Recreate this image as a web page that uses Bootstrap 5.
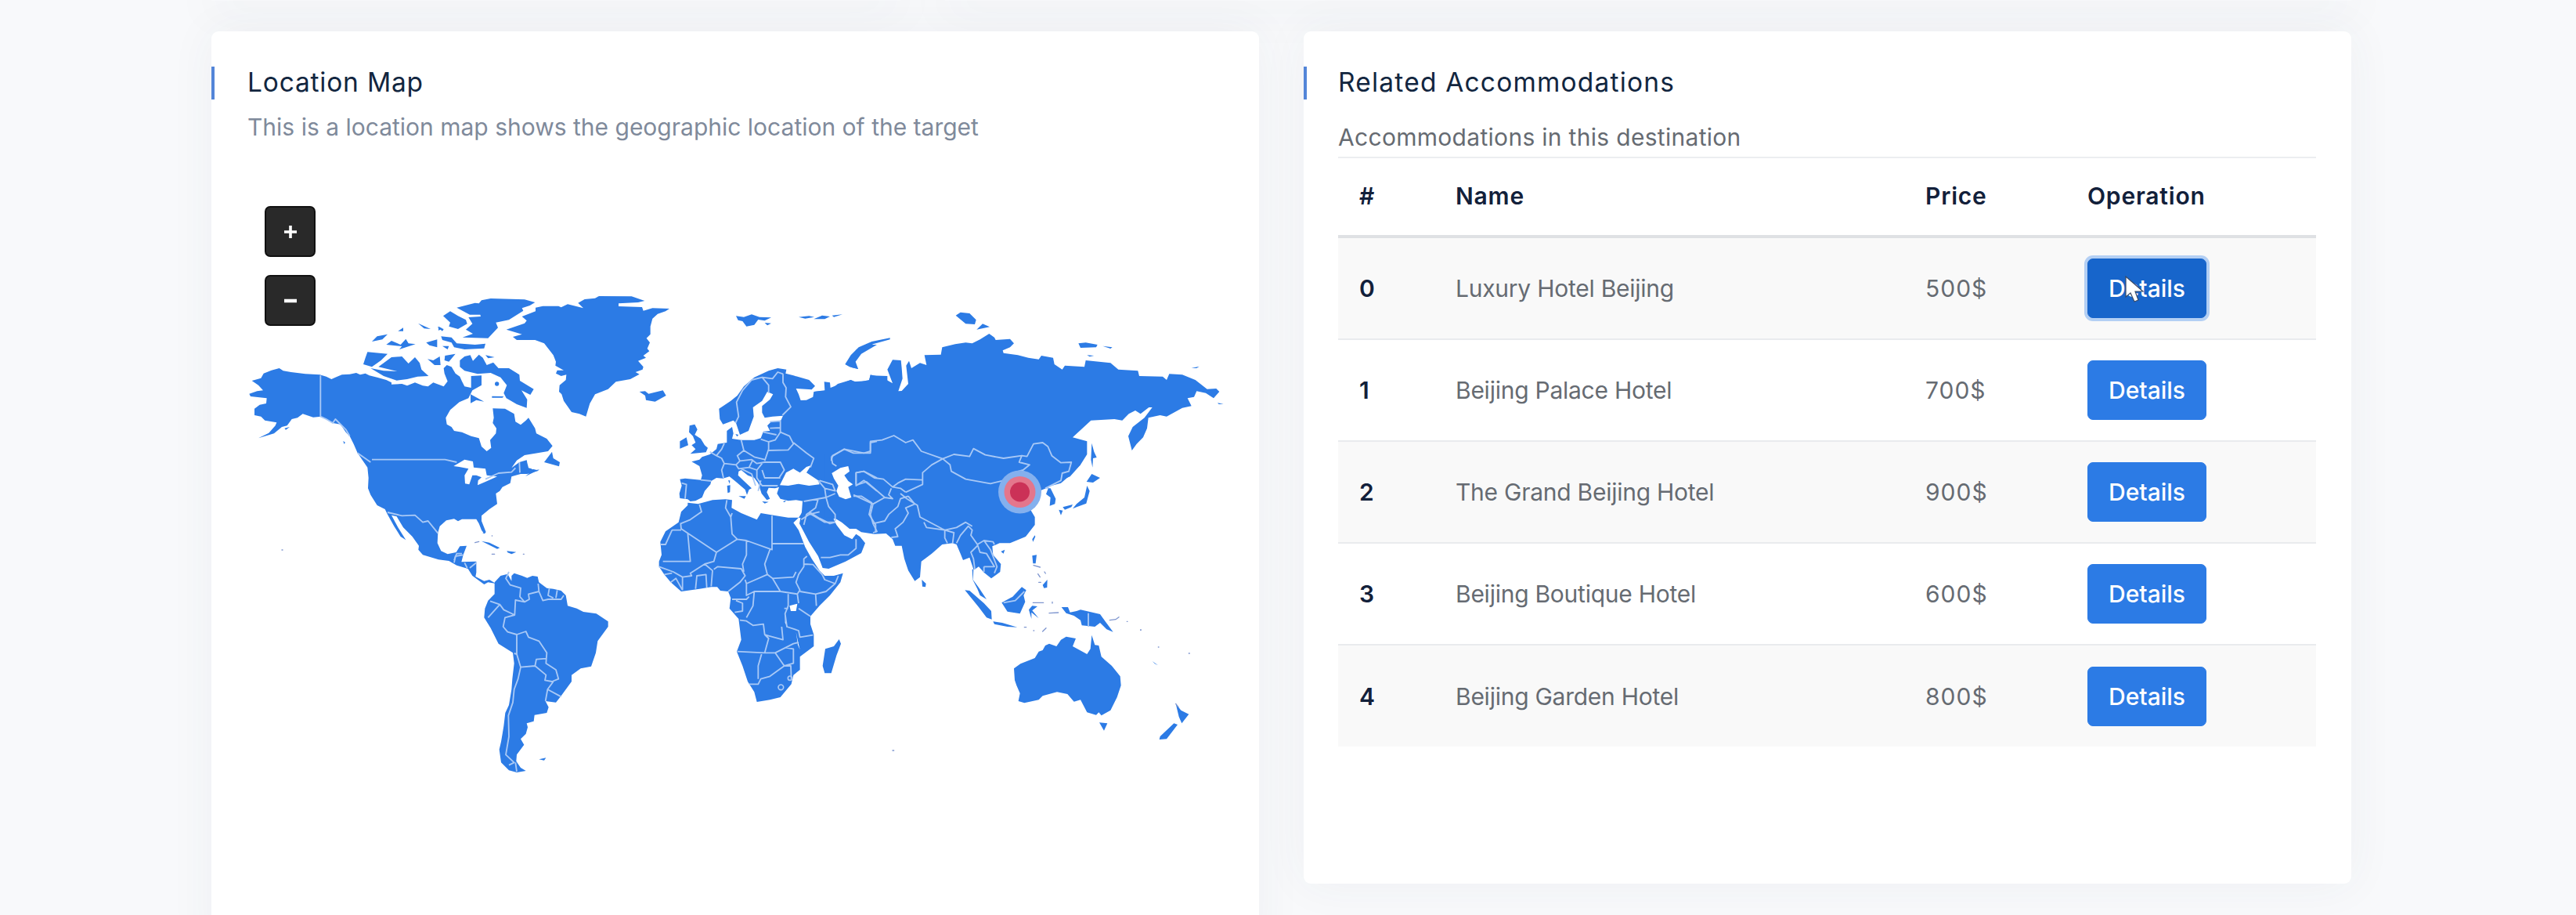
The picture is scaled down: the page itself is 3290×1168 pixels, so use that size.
<!DOCTYPE html>
<html lang="en">
<head>
<meta charset="utf-8">
<meta name="viewport" content="width=device-width, initial-scale=1">
<title>Destination</title>
<link href="https://cdn.jsdelivr.net/npm/bootstrap@5.3.0/dist/css/bootstrap.min.css" rel="stylesheet">
<style>
html,body{height:1168px;overflow:hidden}
body{background:#f8f9fb;font-family:Inter,"Liberation Sans",sans-serif;font-size:30px;line-height:44px;color:#666b72}
.page-top{height:40px;padding:0 287px 0 270px;gap:57px}
.page-top div{height:1px;box-shadow:0 0 60px 6px rgba(60,70,90,.1)}
.upper-a{width:880px}
.upper-b{flex:1}
.page-grid{padding:0 287px 0 270px;gap:57px}
.panel{width:1338px;background:#fff;border:0;border-radius:9px;box-shadow:0 0 60px rgba(60,75,100,.055);padding:45px 45px 0 46px}
.panel-map{height:1180px}
.panel-list{height:1088px;padding-left:44px}
.panel-title{font-size:33.5px;line-height:40px;height:42px;font-weight:400;color:#12263f;margin:0;position:relative;letter-spacing:.8px}
.panel-list .panel-title{letter-spacing:1.2px}
.panel-title::before{content:"";position:absolute;left:-46px;top:0;width:4px;height:42px;background:#5385d8}
.panel-list .panel-title::before{left:-44px}
.map-text{color:#7f8a9b;margin:13px 0 0;line-height:44px}
.list-text{margin:26px 0 3px;line-height:44px;letter-spacing:.3px}
.map-box{position:relative;margin-top:79px}
.zoom-set{position:absolute;left:22px;top:0;gap:23px}
.zoom-key{width:65px;height:65px;border-radius:7px;background:#292929;color:#fff;border:2px solid #111;padding:0;line-height:1}
.zoom-key:hover{background:#292929;color:#fff}
.map-svg{display:block;width:1250px;height:741px;margin-top:4px}
.stay-table{--bs-table-striped-bg:#f9f9f9;--bs-table-color:#666b72;--bs-table-striped-color:#666b72;margin:0;table-layout:fixed;width:1249px;border-color:#e9ebee}
.stay-table>:not(caption)>*>*{padding:26px 27px;border-bottom-width:2px;vertical-align:middle}
.stay-table thead>tr>th{border-top:2px solid #eceef0;border-bottom:4px solid #dfe1e4;padding:26px 27px 28px;letter-spacing:.8px}
.stay-table th{color:#12203a!important;font-weight:600}
.stay-table td{letter-spacing:-.25px}
.stay-table .stay-price{letter-spacing:1px}
.stay-table tbody tr:last-child>*{border-bottom-width:0}
.stay-table tbody tr>*{height:130px}
.btn-stay{--bs-btn-bg:#2c7be5;--bs-btn-color:#fff;--bs-btn-border-color:#2c7be5;--bs-btn-active-color:#fff;font-size:30px;font-weight:500;line-height:44px;width:152px;height:76px;border-radius:7px;padding:0}
.btn-stay.active{background:#1765cb;border-color:#1765cb;color:#fff;box-shadow:0 0 0 4px rgba(110,165,240,.5)}
.pointer{position:absolute;left:48px;top:22px;width:24px;height:34px;overflow:visible}
.land path,.land circle{fill:#2c7be5}
.water path{fill:#fff}
.lines path{fill:none;stroke:#a9c9f6;stroke-width:5.5;stroke-linejoin:round}
.specks path{fill:none;stroke:#7f96cf;stroke-width:4;stroke-linecap:round}
</style>
</head>
<body>
<div class="page-top d-flex"><div class="upper-a"></div><div class="upper-b"></div></div>
<main class="page-grid d-flex align-items-start">
<section class="card panel panel-map flex-shrink-0">
<h4 class="panel-title">Location Map</h4>
<p class="map-text">This is a location map shows the geographic location of the target</p>
<div class="map-box">
<div class="zoom-set d-flex flex-column">
<button class="btn zoom-key" type="button" aria-label="Zoom in"><svg width="20" height="20" viewBox="0 0 20 20"><path d="M2 10H18M10 2V18" stroke="#fff" stroke-width="3.6"/></svg></button>
<button class="btn zoom-key" type="button" aria-label="Zoom out"><svg width="20" height="20" viewBox="0 0 20 20"><path d="M2 10H18" stroke="#fff" stroke-width="4.5"/></svg></button>
</div>
<svg class="map-svg" viewBox="316 267 1250 741">
<!-- land masses -->
<g class="land">
<g transform="translate(300 360) scale(.33333)">
<path d="M170 330 185 340 215 345 270 352 325 355 350 362 370 372 385 365 410 355 440 353 465 348 480 355 500 350 515 358 545 365 580 375 600 385 600 392 640 390 660 397 690 385 720 397 740 400 760 385 780 392 800 400 815 380 803 350 800 330 812 318 830 325 845 350 862 362 870 380 880 400 905 405 905 360 945 358 945 395 910 415 895 445 860 460 825 490 808 520 812 545 830 555 840 570 870 575 905 590 935 598 945 630 965 648 982 635 978 605 1000 580 1002 560 988 540 992 520 988 484 1035 485 1070 505 1075 535 1095 547 1115 530 1125 520 1150 560 1155 580 1195 600 1217 628 1200 648 1160 655 1110 663 1080 683 1060 712 1090 690 1118 682 1125 712 1165 722 1120 735 1095 735 1060 745 1055 770 1025 785 1015 800 1000 810 1005 850 975 870 945 895 945 915 962 958 955 964 945 950 935 925 925 908 870 908 855 916 840 907 810 913 785 935 778 960 776 1000 790 1030 815 1042 848 1035 862 1012 888 1010 875 1045 868 1072 925 1070 925 1112 922 1128 955 1145 975 1140 1000 1155 970 1150 955 1158 910 1125 893 1098 850 1085 820 1068 780 1063 720 1045 703 1025 705 1010 680 975 645 940 620 898 600 893 625 940 655 988 635 975 610 935 585 890 575 870 545 855 520 815 510 790 512 750 508 710 470 655 455 620 440 590 425 575 405 545 375 540 330 515 300 518 260 505 240 520 218 525 200 550 180 555 150 580 90 598 130 578 155 550 160 538 115 530 100 515 75 510 75 485 95 470 120 465 122 445 60 438 55 428 85 418 108 415 90 395 65 378 100 368 110 350 140 338Z"/>
<path d="M862 300 880 285 902 280 912 302 935 278 950 290 965 318 990 308 1010 330 1050 330 1090 355 1092 378 1145 410 1132 432 1098 415 1120 450 1118 482 1080 468 1040 445 1030 425 1042 395 1018 365 980 348 930 352 880 340 862 325Z"/>
<path d="M508 268 585 275 560 300 525 325 492 315 500 290ZM550 325 600 288 640 285 665 312 690 288 708 310 715 335 742 360 700 362 660 372 620 377 570 360 520 330 570 340 622 342ZM525 228 545 208 585 200 565 220ZM580 240 600 225 635 240 655 218 665 235 692 238 630 258 640 246ZM702 158 750 180 725 178ZM775 172 800 180 795 188ZM733 232 775 220 775 250 745 242ZM738 295 760 300 785 285 788 318 765 318ZM805 282 845 275 820 305 803 300ZM795 245 820 245 815 258ZM903 430 955 458 925 452 903 464ZM985 437 1030 438 1025 443 985 443ZM1185 690 1215 650 1220 675 1245 690 1242 706ZM1113 744 1140 722 1168 718ZM470 650 520 690 518 702ZM190 560 210 555 195 566ZM415 608 423 615 418 620ZM625 188 645 175 645 188Z"/><circle cx="1004" cy="390" r="8"/>
</g>
<g transform="translate(560 680) scale(.33333)">
<path d="M215 190 215 235 190 260 178 290 175 325 200 365 230 425 285 460 290 500 283 560 280 600 270 660 256 690 250 740 246 765 240 800 233 830 240 880 270 910 300 918 335 912 315 900 298 875 300 850 328 812 315 790 335 770 342 745 338 730 365 722 368 698 415 690 422 668 410 645 450 650 470 625 510 570 510 545 545 520 585 512 603 460 610 415 650 360 650 340 605 310 555 303 530 290 495 280 488 240 470 222 440 215 415 212 385 190 380 168 360 165 340 173 320 165 290 155 280 165 280 185 265 158 238 165ZM165 32 195 38 235 58 225 62ZM262 70 298 74 280 82 265 76ZM385 868 412 862 405 872ZM168 0 180 0 176 4Z"/>
</g>
<g transform="translate(560 360) scale(.33333)">
<path d="M260 182 330 158 338 148 320 132 372 112 372 98 400 92 460 92 470 97 495 85 555 100 535 80 560 66 600 62 615 54 740 55 790 72 765 78 690 82 690 93 780 96 785 110 820 100 885 102 870 112 840 122 820 140 812 170 812 200 797 215 810 232 800 255 808 265 785 282 795 290 765 302 785 325 782 335 755 345 770 353 735 372 680 382 650 410 600 430 580 465 565 515 540 505 510 498 480 455 472 430 462 420 464 395 488 375 490 355 470 360 450 350 455 338 480 338 448 320 450 305 440 280 405 235 370 222 300 222 285 210 320 200Z"/>
<path d="M70 98 140 80 155 82 165 70 200 63 330 67 370 78 350 90 320 100 325 110 270 145 220 155 228 175 190 215 92 212 132 198 105 182 130 160 115 135 162 132 160 125 120 125ZM18 130 45 112 75 130 105 145 110 160 75 180 40 170 45 155ZM10 208 50 212 70 235 140 240 180 236 175 254 100 258 60 250 50 232 15 222ZM180 280 215 288 190 292ZM0 170 15 178 0 186Z"/>
</g>
<g transform="translate(800 440) scale(.33333)">
<path d="M355 245 400 215 425 195 450 160 490 125 545 100 580 90 613 95 610 110 640 118 700 135 723 158 710 172 650 168 660 190 668 213 690 212 715 200 718 180 735 178 760 175 758 142 780 145 782 165 820 150 860 135 885 145 930 135 935 118 1000 120 1000 690 850 690 820 670 800 665 740 680 680 665 660 662 675 640 680 600 650 595 620 598 590 590 577 570 585 545 570 550 545 548 538 565 550 590 538 595 518 570 505 530 490 510 465 500 440 480 430 485 428 500 448 520 480 550 470 555 462 575 455 555 420 525 395 505 370 512 345 510 325 522 322 535 300 560 290 585 265 598 245 600 235 592 205 588 203 570 212 540 205 515 225 512 285 518 290 500 280 465 250 448 280 440 290 430 320 420 345 400 350 380 385 375 385 350 385 330 405 315 410 340 405 360 440 365 490 365 515 358 525 332 550 330 540 310 555 295 592 290 600 272 560 275 530 280 520 260 520 235 550 210 562 190 540 180 520 215 485 240 488 275 468 330 435 345 420 300 410 290 370 305 358 285Z"/>
<path d="M242 310 262 305 272 325 262 345 285 360 300 385 312 395 305 412 245 418 265 400 250 385 265 375 255 350 240 335ZM205 370 230 355 237 385 205 398ZM50 180 72 178 85 188 140 175 152 195 110 218 75 212 72 195ZM430 580 458 580 452 590ZM386 540 398 538 397 565 388 568ZM390 520 397 520 396 533ZM418 342 430 345 424 352ZM840 75 860 60 880 20 920 0 960 0 900 35 878 65 888 93 865 88ZM600 600 612 596 606 604ZM520 600 545 602 530 608Z"/>
</g>
<g transform="translate(820 620) scale(.33333)">
<path d="M175 65 215 70 270 55 320 52 345 55 343 85 380 105 440 130 455 105 495 112 560 122 600 122 580 142 600 170 625 235 650 280 680 325 700 345 735 345 770 335 760 370 720 420 680 460 645 500 645 530 658 570 658 615 605 655 605 705 580 725 572 760 530 810 490 820 440 828 430 790 405 750 385 690 363 635 380 590 370 510 335 470 340 430 330 405 300 402 288 388 265 388 220 395 150 405 110 370 85 340 65 310 65 290 75 265 70 215 90 175 140 140 150 100 175 75Z"/>
<path d="M603 145 612 100 615 60 700 40 720 90 735 130 745 150 775 190 805 205 820 185 835 195 855 220 840 258 780 290 715 318 692 315 675 270 640 215ZM755 588 762 605 745 650 725 718 700 718 692 690 702 625 735 615Z"/>
</g>
<g transform="translate(1060 400) scale(.33333)">
<path d="M-60 300 0 295 30 270 80 255 90 262 150 258 155 235 200 245 240 268 220 215 240 178 272 180 275 210 278 250 262 298 275 297 300 270 292 200 303 182 312 210 345 190 370 198 362 160 425 158 430 130 480 118 520 112 545 115 575 100 610 78 630 92 635 102 690 98 705 115 690 130 662 142 665 152 720 160 760 170 800 176 810 162 855 170 860 195 890 215 900 200 975 205 980 180 1075 190 1105 215 1180 220 1185 240 1275 242 1290 255 1300 232 1350 235 1400 255 1445 290 1480 288 1492 300 1470 325 1440 305 1405 298 1395 320 1370 325 1385 355 1350 362 1290 395 1265 390 1220 400 1215 440 1200 475 1175 500 1157 525 1143 470 1160 435 1205 400 1235 360 1222 360 1190 385 1170 372 1145 385 1120 410 1090 405 1000 410 930 475 985 490 985 540 960 580 920 620 885 650 700 700-60 700Z"/>
<path d="M58 195 80 160 110 130 160 108 230 94 230 100 165 118 120 150 95 185 108 213 75 205ZM482 8 500 0 535 0 560 25 555 42 520 40ZM562 62 585 40 612 52ZM952 115 980 112 1025 120 1020 130 960 132ZM1045 125 1082 130 1075 135ZM985 160 1012 162 995 166ZM1385 210 1415 203 1405 210ZM1003 497 1012 530 1022 552 1008 555 1006 590 1000 560ZM8 8 48 4 15 14ZM1485 343 1508 347 1490 348Z"/>
<path d="M-360 10-330 14-300 4-270 14-225 16-250 28-275 24-290 44-320 50-335 30-352 26ZM-250 36-225 38-240 46ZM-120 14-80 10-60 14-95 20ZM-62 22-30 8 0 12 -20 22ZM482 8 500-4 535 0Z"/>
</g>
<g transform="translate(1060 560) scale(.33333)">
<path d="M-20 300 20 305 45 320 75 345 100 345 120 358 170 365 215 363 240 385 250 410 275 410 285 460 300 505 325 545 345 530 350 470 390 440 430 405 470 400 485 405 500 440 510 465 535 455 550 500 548 540 570 570 600 615 575 600 565 575 547 540 545 500 555 500 570 490 590 512 618 535 652 510 655 480 625 445 622 412 650 400 690 400 750 375 785 330 785 300 760 258 785 230 790 215 770 190 790 178 808 198 828 190 845 190 865 230 862 250 842 257 845 225 828 212 840 180 885 160 920 145 960 100 960 60-20 60Z"/>
<path d="M983 165 1003 135 1035 150 1008 168ZM985 180 995 200 982 248 945 262 930 268 945 250 975 225ZM877 272 892 275 885 293ZM892 262 930 252 925 262 900 272ZM785 370 787 375 778 395 775 385ZM655 432 670 425 665 440ZM775 448 792 445 788 478 778 478ZM815 560 833 540 832 570 820 572ZM352 540 368 555 366 568 354 566ZM517 580 535 582 590 630 618 660 620 692 600 685 570 645ZM625 700 660 705 718 722 680 720 630 710ZM658 628 700 605 735 568 752 580 742 600 748 625 728 670 680 662ZM762 655 775 640 795 642 775 658 800 688 772 665 772 690ZM887 645 912 645 920 665 945 660 960 655 1035 672 1055 700 1085 740 1060 730 1035 705 1015 720 965 715 960 695 935 678 905 668Z"/>
</g>
<g transform="translate(1260 760) scale(.33333)">
<path d="M105 280 130 262 185 240 200 215 215 210 225 192 240 185 268 195 285 170 305 158 342 165 330 195 385 225 398 205 403 152 415 190 430 192 440 235 480 270 512 310 515 345 500 390 475 440 440 460 430 448 420 458 385 448 360 400 335 407 310 378 270 370 215 385 200 400 145 412 122 405 128 375 115 345 108 325ZM432 487 463 490 450 518ZM725 415 745 440 775 455 748 490 737 465ZM718 490 732 495 690 550 662 552 665 540ZM635 252 657 268 645 262Z"/>
</g>
</g>
<!-- inland seas, lakes and gulfs -->
<g class="water">
<g transform="translate(300 360) scale(.33333)"><path d="M838 705 880 680 912 687 915 710 960 715 965 740 1005 745 960 765 930 778 932 760 945 748 925 740 910 740 898 775 882 772 880 740 895 715 860 708ZM1120 680 1150 665 1190 658 1170 700 1140 718 1122 700Z"/></g>
<g transform="translate(800 440) scale(.33333)"><path d="M588 538 612 490 640 475 665 490 690 468 708 462 690 490 735 520 740 535 700 540 660 533 620 540ZM787 492 820 472 850 465 855 485 835 500 850 522 868 535 850 545 862 585 840 592 815 582 805 560 812 540 795 512Z"/></g>
<g transform="translate(820 620) scale(.33333)"><path d="M565 460 595 452 590 480 570 480ZM590 560 598 600 605 628 597 610ZM548 490 553 530 560 545 548 525Z"/></g>
</g>
<!-- national borders -->
<g class="lines">
<g transform="translate(300 360) scale(.33333)"><path d="M328 358V515L350 525 375 540 385 525 425 565 440 590M525 680H805L850 690M960 755 1010 732 1060 728 1075 712M1090 690 1092 730M585 882 640 895 690 893 720 920 740 915 778 962M840 1065 850 1040 870 1040M890 1095 880 1075M900 1095 925 1075M470 655 520 690"/></g>
<g transform="translate(560 680) scale(.33333)"><path d="M270 150 258 175 275 200 315 212 312 245 330 265 348 255 345 235 385 225 382 195M385 225 400 260 420 255 470 255 480 240M425 212 420 240 440 250M455 220 450 250M330 265 295 258 292 315 250 295 235 275 198 262M235 275 190 325M292 315 255 325 248 360 265 380 300 390 335 378 345 400 385 415 415 460 412 500 450 525 460 560 435 570 408 565 412 545 370 510 375 485 412 482M370 510 315 515 300 465 300 390M290 462 300 465M315 515 305 560 290 600 285 650 268 700 270 780 258 850 290 880 270 890M295 880 300 915M440 570 418 600 410 645M418 600 470 628M60 115 65 90 95 85"/></g>
<g transform="translate(800 440) scale(.33333)"><path d="M418 300 430 275 422 220 445 175 480 135 520 125 545 155 545 185M520 125 560 130 580 105 600 112M600 112 600 145 612 165 610 200 630 238 598 270M550 295 590 292 590 335 570 365 545 372 545 400 530 445M525 335 575 345M550 320 590 318M590 335 625 350 640 380 620 403 545 405M515 362 545 372M640 375 690 415 718 435 705 470M440 365 450 405 425 425 435 445 420 460 375 455 365 480 372 510M450 405 490 430 530 440M435 445 480 440 500 455 530 450 590 450 605 480 585 510M485 440 470 470 430 475 420 460M375 455 365 435 345 425 320 410M345 425 365 400 375 378M470 470 500 480 520 455M500 480 500 510 520 540 580 540M520 480 530 510 590 510M440 475 480 495 495 540M515 520 505 560M285 518 325 522M212 530 230 535 225 590M740 520 790 535 800 560 760 550 735 520M760 550 765 585 800 570M680 600 765 585 775 620 800 650 800 675M735 590 725 625 690 650 680 690M700 640 740 665 780 685 800 680M785 430 835 400 910 415 935 408 935 375 960 370M785 430 790 455 805 465M870 580 900 580 940 605 930 650 955 690 955 720M880 490 910 485 960 510M880 490 880 540 910 520 960 560"/></g>
<g transform="translate(820 620) scale(.33333)"><path d="M220 72 228 100 185 130 148 145 150 165 285 255 365 205 345 185 340 120 320 85 325 55M115 170H150M115 170 90 225H70M175 180 185 290H115L80 290M340 120 345 105M365 205 400 210 498 245V115M498 222H620M285 255 275 290 240 300 185 335 190 345 155 350 120 330 65 310M240 300 270 325 265 385M275 320 290 310 380 318 395 345 375 370 330 405M400 210 400 265 385 300 390 330M490 245 470 300 480 340 400 375 395 360M480 340 500 355 580 350 590 330M500 355 530 405 430 405 400 420 400 375M530 405 595 415 605 400 590 370 600 340 620 310 620 280 632 270M620 300 655 302 690 340M690 340 700 360 740 375 705 405 665 415 605 405M752 345 740 375M665 415 668 460M595 415 600 450M600 470 645 500M560 415 560 460 548 490 555 540 600 555 605 580 655 572M535 540 540 590 485 575 470 570 465 530 425 535 400 518 375 515M400 505 425 460 430 405M345 435H400L410 425M360 440 385 450 385 480 355 485M470 570 485 585 470 640 365 635M470 640 510 640 580 605 600 600M510 640 545 690 580 680 580 625 550 620M545 690 570 690 572 740M545 690 490 730 455 740 445 760 410 760M445 740V690L458 645M155 350 155 400M205 395 210 345 245 340 248 390M110 370 130 355 155 400M85 340 115 335M685 275 720 275 760 265 790 265 820 240 820 205M610 130 640 110 680 100M640 105 700 140 740 140M545 470H560"/><circle cx="532" cy="772" r="10" fill="none" stroke="#a9c9f6" stroke-width="5"/><circle cx="567" cy="737" r="8" fill="none" stroke="#a9c9f6" stroke-width="5"/></g>
<g transform="translate(1060 400) scale(.33333)"><path d="M5 565 10 545 55 520 90 535 155 535 155 490 200 485 245 468 290 495 318 485 350 528 432 557 475 540 535 548 550 518 595 542 665 555 735 545 725 570 765 580 740 600 690 615 665 640 615 652 520 635 465 605 460 580 432 557 390 580 355 610 355 655 290 685M735 545 755 548 780 500 815 495 835 510 850 545 885 572 925 570 915 605 890 612 885 640 825 670"/></g>
<g transform="translate(1060 560) scale(.33333)"><path d="M100 175V130L130 125 170 150 205 155 240 185 260 170 290 155 355 158M240 185 270 190 290 205M235 190 225 215 240 230 210 225 140 165 100 178M210 225 165 250 90 215M165 250 155 290 165 325 210 315 225 290 260 260 270 230 300 220M270 210 295 230 335 255 345 300 430 345 440 350 485 340 520 320 545 335M300 220 325 250 290 265 300 285 280 320 250 345 260 375 235 378M165 325 180 355 165 360M360 320 370 340 440 350M440 350 440 380 450 400M440 350 475 360 470 400M485 400 500 370 530 335 545 350 540 370 565 405 590 390 625 395 630 405M565 405 575 435 600 440 630 490 590 490M565 410 540 435 550 460 555 500M590 390 615 425 640 490 630 515M590 490 590 510M665 628 710 620 745 585"/><path d="M990 668V720" stroke-width="9"/></g>
</g>
<!-- small islands -->
<g class="specks">
<g transform="translate(560 680) scale(.33333)"><path d="M140 38 155 34M205 82H215M325 82H328M205 12H206"/></g>
<g transform="translate(1060 560) scale(.33333)"><path d="M780 485 805 492M797 518 805 530M822 510 826 516M800 550H808M778 628H818M852 625V630M840 668 875 666M745 722H752M780 735H782M815 738 828 725M1072 695 1095 692 1107 683M1138 700H1140M1190 733H1191"/></g>
<g transform="translate(1260 760) scale(.33333)"><path d="M775 222H778M590 132H592M658 198H660M725 415 735 428"/></g>
<g transform="translate(1140 958) scale(.33333)"><path d="M0 0H5M-2340-768H-2337"/></g>
</g>
<g><circle cx="1302.500" cy="628" r="27.500" fill="#84b0ee"/><circle cx="1302.500" cy="628" r="20" fill="#e4768c"/><circle cx="1302.500" cy="628" r="12.500" fill="#cb3157"/></g>
</svg>
</div>
</section>
<section class="card panel panel-list flex-shrink-0">
<h4 class="panel-title">Related Accommodations</h4>
<p class="list-text">Accommodations in this destination</p>
<table class="table table-striped stay-table">
<colgroup><col style="width:123px"><col style="width:600px"><col style="width:207px"><col></colgroup>
<thead><tr><th>#</th><th>Name</th><th>Price</th><th>Operation</th></tr></thead>
<tbody>
<tr><th>0</th><td>Luxury Hotel Beijing</td><td class="stay-price">500$</td><td><div class="position-relative"><button class="btn btn-stay active" type="button">Details</button><svg class="pointer" viewBox="0 0 24 34"><path d="M1 1V27L7 22 12 33 17 31 13 20H23Z" fill="#fff" stroke="#3a4a66" stroke-width="1.200"/></svg></div></td></tr>
<tr><th>1</th><td>Beijing Palace Hotel</td><td class="stay-price">700$</td><td><button class="btn btn-stay" type="button">Details</button></td></tr>
<tr><th>2</th><td>The Grand Beijing Hotel</td><td class="stay-price">900$</td><td><button class="btn btn-stay" type="button">Details</button></td></tr>
<tr><th>3</th><td>Beijing Boutique Hotel</td><td class="stay-price">600$</td><td><button class="btn btn-stay" type="button">Details</button></td></tr>
<tr><th>4</th><td>Beijing Garden Hotel</td><td class="stay-price">800$</td><td><button class="btn btn-stay" type="button">Details</button></td></tr>
</tbody>
</table>
</section>
</main>
<script src="https://cdn.jsdelivr.net/npm/bootstrap@5.3.0/dist/js/bootstrap.bundle.min.js"></script>
</body>
</html>
